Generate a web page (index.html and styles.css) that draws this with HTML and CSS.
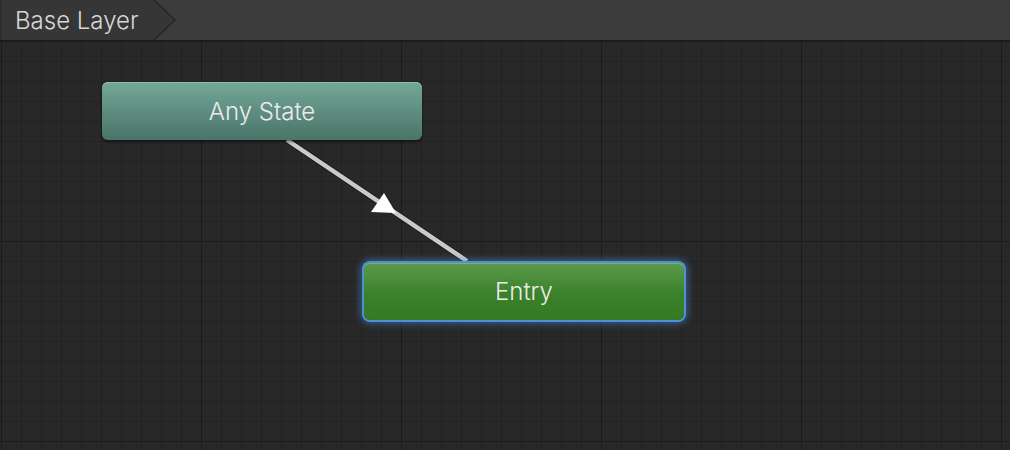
FILE: index.html
```html
<!DOCTYPE html>
<html lang="en">
<head>
    <meta charset="UTF-8">
    <meta name="viewport" content="width=device-width, initial-scale=1.0">
    <title>Animator - Base Layer</title>
    <link rel="stylesheet" href="styles.css">
</head>
<body>
    <div class="toolbar">
        <div class="crumb">
            <span class="crumb-label">Base Layer</span>
            <svg class="crumb-arrow" width="24" height="40" viewBox="0 0 24 40">
                <path d="M0 0 L21 20 L0 40 Z" fill="#363636"/>
                <path d="M0 0 L21 20 L0 40" fill="none" stroke="#262626" stroke-width="1.5"/>
            </svg>
        </div>
    </div>

    <div class="graph">
        <!-- transition line, page coords shifted by the toolbar height -->
        <svg class="wires" width="1010" height="409" viewBox="0 41 1010 409">
            <line x1="287" y1="140" x2="467" y2="261" stroke="#1e1e1e" stroke-width="6.5" stroke-linecap="round"/>
            <line x1="287" y1="140" x2="467" y2="261" stroke="#cacaca" stroke-width="4.5"/>
            <polygon points="384,193 371,212 396,213" fill="#ffffff"/>
        </svg>

        <div class="node node-any">Any State</div>
        <div class="node node-entry selected">Entry</div>
    </div>
</body>
</html>
```

FILE: styles.css
```css
body {
    margin: 0;
    background-color: #282828;
    font-family: "Inter", "Noto Sans", sans-serif;
    color: #e4e4e4;
    overflow: hidden;
}

.toolbar {
    height: 40px;
    background-color: #3c3c3c;
    border-bottom: 1px solid #1c1c1c;
    display: flex;
}

.crumb {
    display: flex;
    height: 40px;
}

.crumb-label {
    display: flex;
    align-items: center;
    width: 154px;
    padding-left: 13px;
    background-color: #363636;
    border-left: 2px solid #2e2e2e;
    font-size: 24px;
    font-weight: 300;
    color: #d8d8d8;
    box-sizing: border-box;
}

.crumb-arrow {
    display: block;
}

.graph {
    position: relative;
    height: 409px;
    background-color: #282828;
    background-image:
        linear-gradient(to right, #1b1b1b 1px, transparent 1px),
        linear-gradient(to bottom, #1b1b1b 1px, transparent 1px),
        linear-gradient(to right, #222222 1px, transparent 1px),
        linear-gradient(to bottom, #222222 1px, transparent 1px);
    background-size: 200px 200px, 200px 200px, 20px 20px, 20px 20px;
    background-position: 1px 0, 0 0, 1px 0, 0 0;
}

.wires {
    position: absolute;
    left: 0;
    top: 0;
}

.node {
    position: absolute;
    width: 320px;
    height: 58px;
    border-radius: 6px;
    display: flex;
    align-items: center;
    justify-content: center;
    font-size: 24px;
    font-weight: 300;
    color: #ececec;
    box-sizing: border-box;
}

.node-any {
    left: 102px;
    top: 41px;
    background: linear-gradient(to bottom, #72a898, #4b7469);
    box-shadow: inset 0 1px 0 #8fc0b0, 0 2px 3px rgba(0, 0, 0, 0.45);
}

.node-entry {
    left: 364px;
    top: 222px;
    height: 57px;
    background: linear-gradient(to bottom, #5c9a4c, #3a8129 55%, #347a24);
}

.node.selected {
    box-shadow: inset 0 1px 0 #7ab26a, 0 0 0 2px #4f8fd6, 0 0 7px 4px rgba(70, 140, 220, 0.5);
}
```
